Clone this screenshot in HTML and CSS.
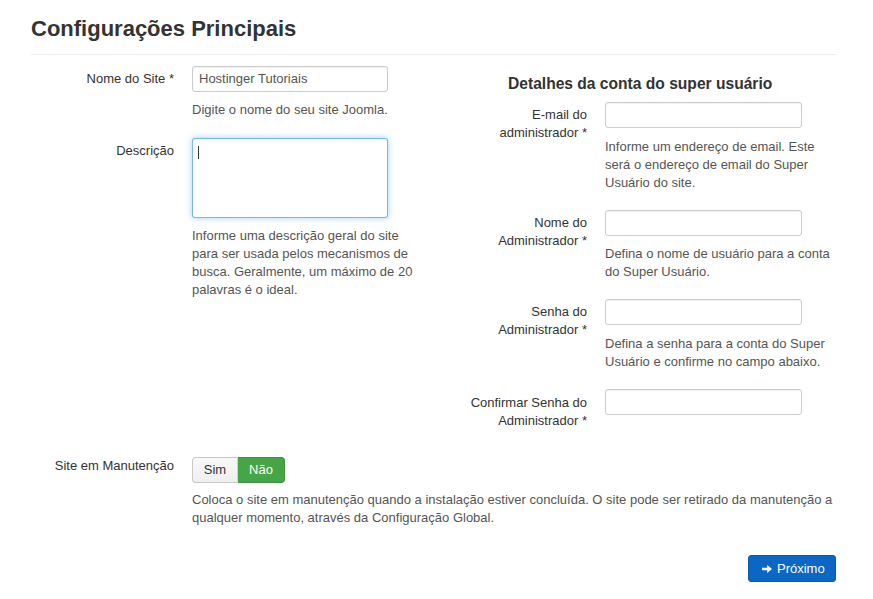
FILE: index.html
```html
<!DOCTYPE html>
<html lang="pt-BR">
<head>
<meta charset="utf-8">
<title>Configurações Principais</title>
<link rel="stylesheet" href="styles.css">
</head>
<body>
<div class="page">
  <h1 class="title">Configurações Principais</h1>
  <div class="columns">
    <div class="col col-left">
      <div class="group">
        <label class="label">Nome do Site *</label>
        <div class="controls">
          <div class="input">Hostinger Tutoriais</div>
          <p class="help">Digite o nome do seu site Joomla.</p>
        </div>
      </div>
      <div class="group">
        <label class="label">Descrição</label>
        <div class="controls">
          <div class="textarea"><span class="caret"></span></div>
          <p class="help">Informe uma descrição geral do site para ser usada pelos mecanismos de busca. Geralmente, um máximo de 20 palavras é o ideal.</p>
        </div>
      </div>
    </div>
    <div class="col col-right">
      <h2 class="subtitle">Detalhes da conta do super usuário</h2>
      <div class="group">
        <label class="label">E-mail do administrador *</label>
        <div class="controls">
          <div class="input"></div>
          <p class="help">Informe um endereço de email. Este será o endereço de email do Super Usuário do site.</p>
        </div>
      </div>
      <div class="group">
        <label class="label">Nome do Administrador *</label>
        <div class="controls">
          <div class="input"></div>
          <p class="help">Defina o nome de usuário para a conta do Super Usuário.</p>
        </div>
      </div>
      <div class="group">
        <label class="label">Senha do Administrador *</label>
        <div class="controls">
          <div class="input"></div>
          <p class="help">Defina a senha para a conta do Super Usuário e confirme no campo abaixo.</p>
        </div>
      </div>
      <div class="group">
        <label class="label">Confirmar Senha do Administrador *</label>
        <div class="controls">
          <div class="input"></div>
        </div>
      </div>
    </div>
  </div>
  <div class="group group-wide">
    <label class="label label-toggle">Site em Manutenção</label>
    <div class="controls">
      <div class="toggle">
        <span class="toggle-btn toggle-off">Sim</span><span class="toggle-btn toggle-on">Não</span>
      </div>
      <p class="help help-toggle">Coloca o site em manutenção quando a instalação estiver concluída. O site pode ser retirado da manutenção a qualquer momento, através da Configuração Global.</p>
    </div>
  </div>
  <div class="actions">
    <button class="btn-primary" type="button">
      <svg class="arrow" width="10" height="8" viewBox="0 0 10 8"><path d="M0 2.8h5.2V0L10 4 5.2 8V5.2H0z" fill="#fff"/></svg>
      <span>Próximo</span>
    </button>
  </div>
</div>
</body>
</html>
```

FILE: styles.css
```css
* { box-sizing: border-box; }

body {
  margin: 0;
  background: #fff;
  font-family: "Liberation Sans", Arial, Helvetica, sans-serif;
  font-size: 13px;
  line-height: 18px;
  color: #333;
}

.page {
  margin-left: 31px;
  width: 805px;
}

.title {
  margin: 16px 0 0;
  padding-bottom: 12px;
  border-bottom: 1px solid #eee;
  font-size: 22px;
  line-height: 26px;
  font-weight: bold;
  color: #333;
}

.columns {
  display: grid;
  grid-template-columns: 389px 409px;
  column-gap: 7px;
  margin-top: 11px;
}

.group {
  display: flex;
  align-items: flex-start;
}

.col-left .group { margin-bottom: 19px; }
.col-right .group { margin-bottom: 18px; }

.label {
  flex: 0 0 auto;
  text-align: right;
  padding-top: 4px;
  margin-right: 18px;
  color: #333;
}

.col-left .label,
.group-wide .label { width: 143px; }

.col-right .label {
  width: 160px;
  padding-left: 30px;
}

.col-right .group:last-child .label { padding-top: 5px; }

.col-left .controls { width: 228px; }
.col-right .controls { width: 231px; }
.group-wide .controls { flex: 1; }

.input {
  width: 197px;
  height: 26px;
  padding: 3px 6px;
  border: 1px solid #ccc;
  border-radius: 3px;
  color: #555;
  background: #fff;
  box-shadow: inset 0 1px 1px rgba(0, 0, 0, 0.06);
}

.col-left .input { width: 196px; }

.textarea {
  width: 196px;
  height: 80px;
  padding: 7px 5px;
  border: 1px solid rgba(82, 168, 236, 0.8);
  border-radius: 3px;
  box-shadow: inset 0 1px 1px rgba(0, 0, 0, 0.05), 0 0 6px rgba(82, 168, 236, 0.55);
  background: #fff;
}

.caret {
  display: block;
  width: 1px;
  height: 13px;
  background: #333;
}

.help {
  margin: 9px 0 0;
  color: #555;
}

.col-right .help { margin-top: 9.5px; }

.subtitle {
  margin: 8px 0 8px 81px;
  font-size: 15.6px;
  line-height: 20px;
  font-weight: bold;
  color: #333;
}

.group-wide {
  margin-top: 9.5px;
}

.label-toggle { padding-top: 0; }

.toggle {
  display: inline-flex;
  height: 26px;
}

.toggle-btn {
  display: inline-flex;
  align-items: center;
  justify-content: center;
  height: 26px;
  font-size: 13px;
}

.toggle-off {
  width: 46px;
  background: linear-gradient(#f8f8f8, #efefef);
  border: 1px solid #c8c8c8;
  border-right: 1px solid #d0d0d0;
  border-radius: 4px 0 0 4px;
  color: #333;
}

.toggle-on {
  width: 47px;
  background: #46a546;
  border: 1px solid #3d923d;
  border-left: 0;
  border-radius: 0 4px 4px 0;
  color: #fff;
}

.help-toggle { margin-top: 8px; }

.actions {
  display: flex;
  justify-content: flex-end;
  margin-top: 28px;
}

.btn-primary {
  display: inline-flex;
  align-items: center;
  gap: 5px;
  height: 27px;
  width: 88px;
  padding: 0 0 0 13px;
  border: 1px solid #0a5cb0;
  border-radius: 3px;
  background: #0b67c6;
  color: #fff;
  font-family: "Liberation Sans", Arial, Helvetica, sans-serif;
  font-size: 13px;
  line-height: 18px;
  cursor: pointer;
}

.arrow { display: block; }
```
